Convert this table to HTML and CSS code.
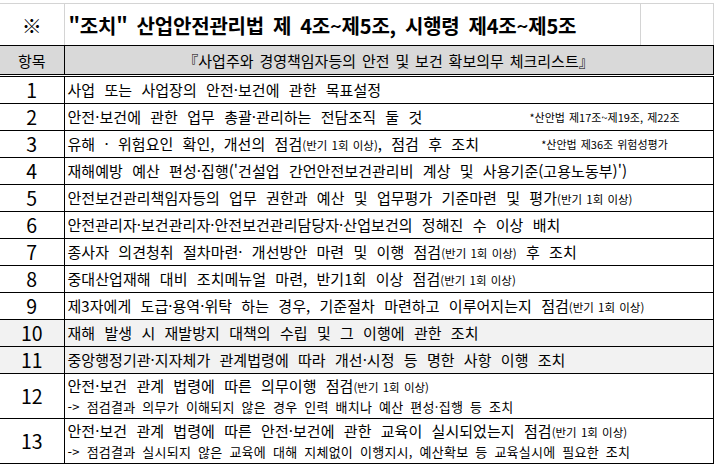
FILE: index.html
```html
<!DOCTYPE html>
<html lang="ko">
<head>
<meta charset="utf-8">
<link rel="stylesheet" href="styles.css">
</head>
<body>
<table class="sheet">
  <colgroup>
    <col class="c-no">
    <col class="c-main">
    <col class="c-side">
  </colgroup>
  <tr class="title-row">
    <td class="t-mark">※</td>
    <td class="t-text">"조치" 산업안전관리법 제 4조~제5조, 시행령 제4조~제5조</td>
    <td class="t-side"></td>
  </tr>
  <tr class="head-row">
    <td class="no">항목</td>
    <td class="head-text" colspan="2">『사업주와 경영책임자등의 안전 및 보건 확보의무 체크리스트』</td>
  </tr>
  <tr class="row">
    <td class="no">1</td>
    <td class="txt" colspan="2">사업 또는 사업장의 안전·보건에 관한 목표설정</td>
  </tr>
  <tr class="row">
    <td class="no">2</td>
    <td class="txt" colspan="2"><div class="line"><span>안전·보건에 관한 업무 총괄·관리하는 전담조직 둘 것</span><span class="note">*산안법 제17조~제19조, 제22조</span></div></td>
  </tr>
  <tr class="row">
    <td class="no">3</td>
    <td class="txt" colspan="2"><div class="line"><span>유해 · 위험요인 확인, 개선의 점검<small>(반기 1회 이상)</small>, 점검 후 조치</span><span class="note">*산안법 제36조 위험성평가</span></div></td>
  </tr>
  <tr class="row">
    <td class="no">4</td>
    <td class="txt" colspan="2">재해예방 예산 편성·집행('건설업 간언안전보건관리비 계상 및 사용기준(고용노동부)')</td>
  </tr>
  <tr class="row">
    <td class="no">5</td>
    <td class="txt" colspan="2">안전보건관리책임자등의 업무 권한과 예산 및 업무평가 기준마련 및 평가<small>(반기 1회 이상)</small></td>
  </tr>
  <tr class="row">
    <td class="no">6</td>
    <td class="txt" colspan="2">안전관리자·보건관리자·안전보건관리담당자·산업보건의 정해진 수 이상 배치</td>
  </tr>
  <tr class="row">
    <td class="no">7</td>
    <td class="txt" colspan="2">종사자 의견청취 절차마련· 개선방안 마련 및 이행 점검<small>(반기 1회 이상)</small> 후 조치</td>
  </tr>
  <tr class="row">
    <td class="no">8</td>
    <td class="txt" colspan="2">중대산업재해 대비 조치메뉴얼 마련, 반기1회 이상 점검<small>(반기 1회 이상)</small></td>
  </tr>
  <tr class="row">
    <td class="no">9</td>
    <td class="txt" colspan="2">제3자에게 도급·용역·위탁 하는 경우, 기준절차 마련하고 이루어지는지 점검<small>(반기 1회 이상)</small></td>
  </tr>
  <tr class="row shaded">
    <td class="no">10</td>
    <td class="txt" colspan="2">재해 발생 시 재발방지 대책의 수립 및 그 이행에 관한 조치</td>
  </tr>
  <tr class="row shaded">
    <td class="no">11</td>
    <td class="txt" colspan="2">중앙행정기관·지자체가 관계법령에 따라 개선·시정 등 명한 사항 이행 조치</td>
  </tr>
  <tr class="row tall">
    <td class="no">12</td>
    <td class="txt" colspan="2">
      <div class="l1">안전·보건 관계 법령에 따른 의무이행 점검<small>(반기 1회 이상)</small></div>
      <div class="l2">-&gt; 점검결과 의무가 이해되지 않은 경우 인력 배치나 예산 편성·집행 등 조치</div>
    </td>
  </tr>
  <tr class="row tall last">
    <td class="no">13</td>
    <td class="txt" colspan="2">
      <div class="l1">안전·보건 관계 법령에 따른 안전·보건에 관한 교육이 실시되었는지 점검<small>(반기 1회 이상)</small></div>
      <div class="l2">-&gt; 점검결과 실시되지 않은 교육에 대해 지체없이 이행지시, 예산확보 등 교육실시에 필요한 조치</div>
    </td>
  </tr>
</table>
</body>
</html>
```
FILE: styles.css
```css
html, body {
  margin: 0;
  padding: 0;
  background: #ffffff;
}
body {
  padding-top: 3px;
  font-family: "Noto Sans CJK KR", "Noto Sans", sans-serif;
  color: #000;
}
.sheet {
  border-collapse: collapse;
  table-layout: fixed;
  width: 713px;
}
.c-no { width: 64px; }
.c-main { width: 576px; }
.c-side { width: 73px; }
td {
  padding: 0;
  white-space: nowrap;
  overflow: hidden;
}
.title-row td {
  height: 39px;
  border-top: 1px solid #d4d4d4;
  border-left: 1px solid #d4d4d4;
  border-right: 1px solid #d4d4d4;
  border-bottom: 1px solid #000;
  padding-top: 2px;
}
.title-row .t-mark {
  border-left: none;
  text-align: center;
  font-size: 20px;
  font-weight: 700;
}
.title-row .t-text {
  font-size: 20px;
  font-weight: 700;
  padding-left: 4px;
  letter-spacing: -0.2px;
  word-spacing: 3.6px;
}
.head-row td {
  height: 28px;
  background: #d9d9d9;
  border-bottom: 3px double #000;
  border-right: 1px solid #000;
  font-size: 15px;
}
.head-row .no {
  text-align: center;
}
.head-row .head-text {
  text-align: center;
  word-spacing: 1.7px;
}
.row td {
  height: 26px;
  border-bottom: 1px solid #000;
  border-right: 1px solid #000;
  line-height: 20px;
}
.row .no {
  text-align: center;
  font-size: 19.5px;
}
.row .txt {
  font-size: 15px;
  padding-left: 3px;
  letter-spacing: 0.05px;
  word-spacing: 5px;
}
.row small {
  font-size: 11.5px;
  letter-spacing: 0;
  word-spacing: 1px;
}
.shaded td {
  background: #f2f2f2;
}
.line {
  display: flex;
  align-items: center;
}
.note {
  margin-left: auto;
  width: 216px;
  text-align: center;
  font-size: 11px;
  letter-spacing: 0;
  word-spacing: 1px;
}
.tall td {
  height: 43px;
}
.tall .txt {
  vertical-align: top;
  padding-top: 1px;
}
.l1 {
  line-height: 22px;
}
.l2 {
  font-size: 13px;
  line-height: 18px;
  letter-spacing: 0.25px;
  word-spacing: 3px;
}
```
